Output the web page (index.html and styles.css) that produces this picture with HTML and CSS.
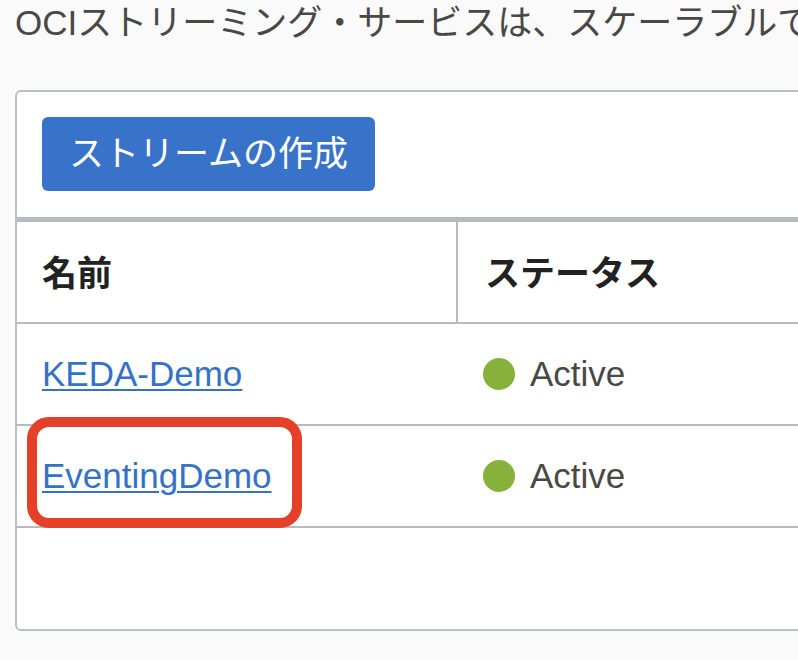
FILE: index.html
```html
<!DOCTYPE html>
<html lang="ja">
<head>
<meta charset="utf-8">
<title>ストリーム</title>
<link rel="stylesheet" href="styles.css">
</head>
<body>
<p class="intro">OCIストリーミング・サービスは、スケーラブルで</p>
<div class="card">
  <div class="toolbar">
    <button class="btn-primary" type="button">ストリームの作成</button>
  </div>
  <div class="table">
    <div class="row head">
      <div class="cell">名前</div>
      <div class="cell divider">ステータス</div>
    </div>
    <div class="row">
      <div class="cell"><a class="link" href="#">KEDA-Demo</a></div>
      <div class="cell status-cell"><span class="dot"></span><span class="status">Active</span></div>
    </div>
    <div class="row">
      <div class="cell name-cell">
        <a class="link" href="#">EventingDemo</a>
        <span class="highlight"></span>
      </div>
      <div class="cell status-cell"><span class="dot"></span><span class="status">Active</span></div>
    </div>
    <div class="empty"></div>
  </div>
</div>
</body>
</html>
```

FILE: styles.css
```css
html, body {
  margin: 0;
  padding: 0;
}

body {
  background: #fafafa;
  font-family: "Liberation Sans", "Noto Sans CJK JP", sans-serif;
  font-size: 35px;
  color: #4a4845;
  overflow: hidden;
  width: 798px;
  height: 660px;
}

.intro {
  margin: 0;
  padding: 0 0 0 15px;
  height: 90px;
  line-height: 46px;
  white-space: nowrap;
  overflow: hidden;
  color: #4a4845;
}

.card {
  margin-left: 15px;
  width: 1000px;
  background: #ffffff;
  border: 2px solid #bcc0c6;
  border-radius: 6px;
  box-sizing: border-box;
}

.toolbar {
  padding: 25px 25px 26px;
}

.btn-primary {
  display: block;
  width: 333px;
  height: 74px;
  border: 0;
  border-radius: 6px;
  background: #3873c9;
  color: #ffffff;
  font-family: "Liberation Sans", "Noto Sans CJK JP", sans-serif;
  font-size: 35px;
  line-height: 74px;
  padding: 0;
  text-align: center;
}

.table {
  border-top: 5px solid #b6bbc1;
}

.row {
  display: grid;
  grid-template-columns: 439px 1fr;
  height: 100px;
  border-bottom: 2px solid #b6bbc1;
}

.cell {
  display: flex;
  align-items: center;
  padding-left: 25px;
  position: relative;
}

.head .cell {
  font-weight: bold;
  color: #222222;
  padding-bottom: 3px;
  box-sizing: border-box;
}

.divider {
  border-left: 2px solid #b6bbc1;
  padding-left: 27px;
}

.status-cell {
  padding-left: 27px;
}

.link {
  color: #3572c6;
  text-decoration: underline;
  text-decoration-thickness: 2px;
  text-underline-offset: 3px;
}

.dot {
  width: 32px;
  height: 32px;
  border-radius: 50%;
  background: #86b23c;
  flex: none;
  margin-left: 0;
}

.status {
  margin-left: 15px;
  color: #4a4843;
}

.highlight {
  position: absolute;
  left: 10px;
  top: -9px;
  width: 275px;
  height: 111px;
  box-sizing: border-box;
  border: 10px solid #e4402a;
  border-radius: 22px;
}

.empty {
  height: 101px;
}
```
